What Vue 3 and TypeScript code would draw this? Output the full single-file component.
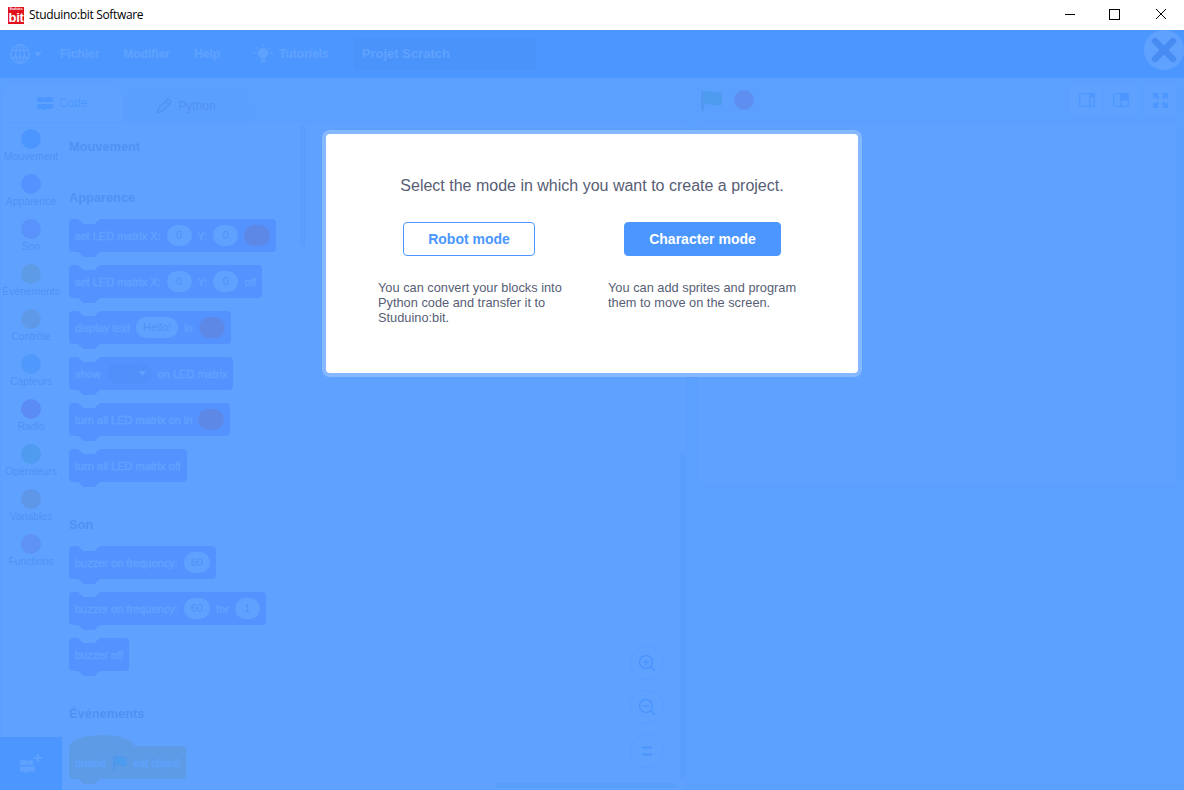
<script setup lang="ts">
type Part = { k: 't' | 'i' | 'c' | 'd' | 'f'; v?: string }
type Block = { parts: Part[]; hat?: boolean }
type Section = { title: string; blocks: Block[] }

const t = (v: string): Part => ({ k: 't', v })
const i = (v: string): Part => ({ k: 'i', v })
const c: Part = { k: 'c' }

const categories = [
  { name: 'Mouvement', color: '#4c97ff' },
  { name: 'Apparence', color: '#9966ff' },
  { name: 'Son', color: '#cf63cf' },
  { name: 'Événements', color: '#ffbf00' },
  { name: 'Contrôle', color: '#ffab19' },
  { name: 'Capteurs', color: '#5cb1d6' },
  { name: 'Radio', color: '#e01f9c' },
  { name: 'Opérateurs', color: '#59c059' },
  { name: 'Variables', color: '#ff8c1a' },
  { name: 'Functions', color: '#ff6680' },
]

const sections: Section[] = [
  { title: 'Mouvement', blocks: [] },
  {
    title: 'Apparence',
    blocks: [
      { parts: [t('set LED matrix X:'), i('0'), t('Y:'), i('0'), c] },
      { parts: [t('set LED matrix X:'), i('0'), t('Y:'), i('0'), t('off')] },
      { parts: [t('display text'), i('Hello!'), t('in'), c] },
      { parts: [t('show'), { k: 'd' }, t('on LED matrix')] },
      { parts: [t('turn all LED matrix on in'), c] },
      { parts: [t('turn all LED matrix off')] },
    ],
  },
  {
    title: 'Son',
    blocks: [
      { parts: [t('buzzer on frequency:'), i('60')] },
      { parts: [t('buzzer on frequency:'), i('60'), t('for'), i('1')] },
      { parts: [t('buzzer off')] },
    ],
  },
  {
    title: 'Événements',
    blocks: [{ hat: true, parts: [t('quand'), { k: 'f' }, t('est cliqué')] }],
  },
]
</script>

<template>
  <div class="window">
    <header class="titlebar">
      <div class="logo"><span class="logo-small">Studuino</span><span class="logo-bit">bit</span></div>
      <span class="title">Studuino:bit Software</span>
      <div class="winctl">
        <svg width="46" height="30" viewBox="0 0 46 30"><path d="M18 14.5h10" stroke="#000" fill="none" /></svg>
        <svg width="46" height="30" viewBox="0 0 46 30"><rect x="17.5" y="9.5" width="10" height="10" stroke="#000" fill="none" /></svg>
        <svg width="46" height="30" viewBox="0 0 46 30"><path d="M18 9l10 10M28 9L18 19" stroke="#000" fill="none" /></svg>
      </div>
    </header>

    <div class="app">
      <nav class="menubar">
        <svg class="globe" width="20" height="20" viewBox="0 0 20 20" fill="none" stroke="#fff" stroke-width="1.4">
          <circle cx="10" cy="10" r="9.2" />
          <ellipse cx="10" cy="10" rx="4.4" ry="9.2" />
          <path d="M10 .8v18.4M1.8 6.5h16.4M1.8 13.5h16.4" />
        </svg>
        <svg class="caret" width="8" height="5" viewBox="0 0 8 5"><path d="M0 0h8L4 5z" fill="#fff" /></svg>
        <span class="menu m-file">Fichier</span>
        <span class="menu m-edit">Modifier</span>
        <span class="menu m-help">Help</span>
        <svg class="bulb" width="20" height="20" viewBox="0 0 20 20" fill="#fff">
          <path d="M10 4.2a5 5 0 0 0-3 9c.6.5.8 1 .8 1.6h4.4c0-.6.2-1.1.8-1.6a5 5 0 0 0-3-9zM8 15.8h4v1.4a1 1 0 0 1-1 1H9a1 1 0 0 1-1-1z" />
          <path d="M10 0.8v1.7M3.2 3.4l1.2 1.2M16.8 3.4l-1.2 1.2M0.8 9.2h1.7M17.5 9.2h1.7" stroke="#fff" stroke-width="1.2" stroke-linecap="round" />
        </svg>
        <span class="menu">Tutoriels</span>
        <div class="project">Projet Scratch</div>
        <div class="closebtn">
          <svg width="28" height="28" viewBox="0 0 28 28"><path d="M5 5l18 18M23 5L5 23" stroke="#1d2a78" stroke-width="6.5" stroke-linecap="round" /></svg>
        </div>
      </nav>

      <div class="body">
        <section class="editor">
          <div class="tabs">
            <div class="tab active">
              <svg width="16" height="13" viewBox="0 0 16 13" fill="#4c97ff"><path d="M1 0h5l1 1h2l1-1h5a1 1 0 0 1 1 1v3a1 1 0 0 1-1 1H1a1 1 0 0 1-1-1V1a1 1 0 0 1 1-1zM1 7h14a1 1 0 0 1 1 1v3a1 1 0 0 1-1 1h-5l-1 1H6l-1-1H1a1 1 0 0 1-1-1V8a1 1 0 0 1 1-1z" /></svg>
              <span>Code</span>
            </div>
            <div class="tab">
              <svg width="16" height="16" viewBox="0 0 16 16" fill="none" stroke="#575e75" stroke-width="1.3" stroke-linejoin="round"><path d="M1.5 14.5l.8-4L11 1.7a1.5 1.5 0 0 1 2.1 0l1.200 1.200a1.500 1.500 0 0 1 0 2.100L5.500 13.700zM9.500 3.200l3.300 3.300" /></svg>
              <span>Python</span>
            </div>
          </div>

          <div class="panel">
            <aside class="cats">
              <div class="cat-list">
                <div v-for="cat in categories" :key="cat.name" class="cat">
                  <span class="dot" :style="{ background: cat.color }"></span>
                  <span class="cat-name">{{ cat.name }}</span>
                </div>
              </div>
              <div class="ext">
                <svg width="22" height="20" viewBox="0 0 22 20" fill="#fff"><path d="M1 6h4l1 1h2l1-1h3a1 1 0 0 1 1 1v3a1 1 0 0 1-1 1H1a1 1 0 0 1-1-1V7a1 1 0 0 1 1-1zM1 12.500h13a1 1 0 0 1 1 1v3a1 1 0 0 1-1 1H9l-1 1H5l-1-1H1a1 1 0 0 1-1-1v-3a1 1 0 0 1 1-1zM17 0h2v3h3v2h-3v3h-2V5h-3V3h3z" /></svg>
              </div>
            </aside>

            <div class="palette">
              <div v-for="sec in sections" :key="sec.title" class="section">
                <h3 class="sec-title">{{ sec.title }}</h3>
                <div v-if="sec.blocks.length" class="blocks">
                  <div
                    v-for="(b, bi) in sec.blocks"
                    :key="bi"
                    class="block"
                    :class="{ hat: b.hat }"
                  >
                    <template v-for="(p, pi) in b.parts" :key="pi">
                      <span v-if="p.k === 't'" class="b-text">{{ p.v }}</span>
                      <span v-else-if="p.k === 'i'" class="b-input">{{ p.v }}</span>
                      <span v-else-if="p.k === 'c'" class="b-color"></span>
                      <span v-else-if="p.k === 'd'" class="b-drop">
                        <svg width="18" height="17" viewBox="0 0 18 17" fill="none" stroke="#6d3fd6" stroke-width="1.500"><path d="M2 1v15M6 1v15M10 1v15M14 1v15" /></svg>
                        <svg width="7" height="5" viewBox="0 0 7 5"><path d="M0 0h7L3.500 5z" fill="#fff" /></svg>
                      </span>
                      <svg v-else class="b-flag" width="16" height="16" viewBox="0 0 16 16"><path d="M2 1v15" stroke="#45993d" stroke-width="1.500" /><path d="M3 2c4-2 6 2 11 0v8c-5 2-7-2-11 0z" fill="#4cbf56" stroke="#45993d" /></svg>
                    </template>
                  </div>
                </div>
              </div>
              <div class="pal-scroll"></div>
            </div>

            <div class="workspace">
              <div class="zoomers">
                <div class="zoomer">
                  <svg width="18" height="18" viewBox="0 0 18 18" fill="none" stroke="#2f7fee" stroke-width="1.500" stroke-linecap="round"><circle cx="8" cy="8" r="6.500" /><path d="M13 13l3.500 3.500M8 5.500v5M5.500 8h5" /></svg>
                </div>
                <div class="zoomer">
                  <svg width="18" height="18" viewBox="0 0 18 18" fill="none" stroke="#2f7fee" stroke-width="1.500" stroke-linecap="round"><circle cx="8" cy="8" r="6.500" /><path d="M13 13l3.500 3.500M5.500 8h5" /></svg>
                </div>
                <div class="zoomer">
                  <svg width="12" height="10" viewBox="0 0 12 10" fill="none" stroke="#2f7fee" stroke-width="2"><path d="M1 1.500h10M1 8.500h10" /></svg>
                </div>
              </div>
              <div class="scroll-v"></div>
              <div class="scroll-h"></div>
            </div>
          </div>
        </section>

        <section class="stagecol">
          <div class="stagehead">
            <svg class="flag" width="22" height="21" viewBox="0 0 22 21"><path d="M1.500 1v20" stroke="#45993d" stroke-width="2" /><path d="M3 2c6-3 10 2 18 0v13c-8 2-12-3-18 0z" fill="#4cbf56" /></svg>
            <span class="stop"></span>
            <div class="spacer"></div>
            <div class="sbtn-group">
              <div class="sbtn">
                <svg width="16" height="14" viewBox="0 0 16 14" fill="none" stroke="#4c97ff" stroke-width="1.300"><rect x=".7" y=".7" width="14.600" height="12.600" rx="1" /><path d="M11 .7v12.600" /><rect x="11.500" y="1" width="3.500" height="3" fill="#4c97ff" stroke="none" /></svg>
              </div>
              <div class="sbtn sep">
                <svg width="16" height="14" viewBox="0 0 16 14" fill="none" stroke="#4c97ff" stroke-width="1.300"><rect x=".7" y=".7" width="14.600" height="12.600" rx="1" /><path d="M7.500 .7v12.600M7.500 7h8" /><rect x="8" y="1" width="7" height="6" fill="#4c97ff" stroke="none" /></svg>
              </div>
            </div>
            <div class="sbtn single">
              <svg width="15" height="15" viewBox="0 0 15 15" fill="#4c97ff"><path d="M0 0h6L4.200 1.800 6.500 4.100 4.100 6.500 1.800 4.200 0 6zM15 0v6l-1.800-1.800-2.300 2.300-2.400-2.400 2.300-2.300L9 0zM0 15V9l1.800 1.800 2.300-2.300 2.400 2.400-2.300 2.300L6 15zM15 15H9l1.800-1.800-2.300-2.300 2.400-2.400 2.300 2.300L15 9z" /></svg>
            </div>
          </div>
          <div class="stage"></div>
        </section>
      </div>

      <div class="overlay"></div>

      <div class="modal" role="dialog">
        <p class="prompt">Select the mode in which you want to create a project.</p>
        <div class="modes">
          <div class="mode mode-robot">
            <button class="btn btn-outline">Robot mode</button>
            <p class="desc">You can convert your blocks into<br />Python code and transfer it to<br />Studuino:bit.</p>
          </div>
          <div class="mode mode-char">
            <button class="btn btn-solid">Character mode</button>
            <p class="desc">You can add sprites and program<br />them to move on the screen.</p>
          </div>
        </div>
      </div>
    </div>
  </div>
</template>

<style>
html, body { margin: 0; padding: 0; overflow: hidden; }
</style>

<style scoped>
.window {
  width: 1184px;
  height: 790px;
  display: flex;
  flex-direction: column;
  overflow: hidden;
  font-family: "Liberation Sans", Arial, sans-serif;
  background: #fff;
}
.titlebar {
  height: 30px;
  flex: none;
  display: flex;
  align-items: center;
  padding-left: 8px;
  background: #fff;
}
.logo {
  width: 16px;
  height: 17px;
  background: #e0101c;
  display: flex;
  flex-direction: column;
  align-items: center;
  color: #fff;
  overflow: hidden;
  font-weight: 700;
}
.logo-small { font-size: 3px; line-height: 5px; white-space: nowrap; }
.logo-bit { font-size: 13px; line-height: 11px; letter-spacing: -0.3px; }
.title {
  margin-left: 5px;
  font: 12px/30px "Open Sans", "Noto Sans", sans-serif;
  letter-spacing: -0.33px;
  color: #000;
}
.winctl { margin-left: auto; display: flex; }
.winctl svg { display: block; margin-left: -1px; }
.winctl svg:last-child { margin-left: 0; }

.app {
  position: relative;
  flex: 1;
  min-height: 0;
  display: flex;
  flex-direction: column;
  background: #e6f0ff;
}
.menubar {
  height: 48px;
  flex: none;
  display: flex;
  align-items: center;
  padding-left: 10px;
  background: #4c97ff;
  position: relative;
}
.caret { margin-left: 4px; }
.menu { color: #fff; font-size: 12px; font-weight: 700; }
.m-file { margin-left: 18px; }
.m-edit { margin-left: 24px; }
.m-help { margin-left: 24px; }
.bulb { margin-left: 33px; margin-right: 6px; }
.project {
  margin-left: 25px;
  width: 174px;
  height: 32px;
  padding-left: 8px;
  border-radius: 4px;
  background: #3070d0;
  color: #fff;
  font-size: 13px;
  font-weight: 700;
  line-height: 32px;
}
.closebtn {
  position: absolute;
  right: 0;
  top: 0;
  width: 40px;
  height: 40px;
  border-radius: 50%;
  background: #fff;
  display: flex;
  align-items: center;
  justify-content: center;
}

.body { flex: 1; min-height: 0; display: flex; }
.editor {
  width: 688px;
  flex: none;
  display: flex;
  flex-direction: column;
  padding-top: 5px;
  box-sizing: border-box;
}
.tabs { height: 39px; flex: none; display: flex; align-items: flex-end; }
.tab {
  height: 34px;
  width: 126px;
  margin-left: -1px;
  box-sizing: border-box;
  border: 1px solid #cfdcf0;
  border-bottom: 0;
  border-radius: 16px 16px 0 0;
  background: #d9e3f2;
  display: flex;
  align-items: center;
  justify-content: center;
  gap: 6px;
  font-size: 12px;
  color: #575e75;
}
.tab.active {
  height: 39px;
  width: 124px;
  margin-left: 0;
  background: #fff;
  color: #4c97ff;
}
.panel {
  flex: 1;
  min-height: 0;
  display: flex;
  background: #fff;
  border: 1px solid #cfdcf0;
  border-bottom-right-radius: 8px;
  border-bottom: 0;
  box-sizing: border-box;
}
.cats {
  width: 60px;
  flex: none;
  display: flex;
  flex-direction: column;
  border-right: 1px solid #e9eef2;
}
.cat-list { flex: 1; padding-top: 6px; }
.cat {
  height: 45px;
  display: flex;
  flex-direction: column;
  align-items: center;
  white-space: nowrap;
}
.dot { width: 20px; height: 20px; border-radius: 50%; flex: none; margin-bottom: 2px; }
.cat-name { font-size: 10.400px; line-height: 12px; color: #575e75; }
.ext {
  height: 53px;
  flex: none;
  margin: 0 -1px;
  background: #4c97ff;
  display: flex;
  align-items: center;
  justify-content: center;
}
.palette {
  width: 248px;
  flex: none;
  position: relative;
  overflow: hidden;
  box-sizing: border-box;
  padding: 16px 0 0 7px;
  border-right: 1px solid #eef1f5;
}
.section + .section { margin-top: 35px; }
.sec-title {
  margin: 0 0 13px;
  font-size: 12.800px;
  line-height: 16px;
  font-weight: 700;
  color: #575e75;
}
.blocks { display: flex; flex-direction: column; align-items: flex-start; gap: 13px; }
.block {
  position: relative;
  height: 33px;
  display: flex;
  align-items: center;
  gap: 6px;
  padding: 0 6px;
  background: #9966ff;
  border-radius: 4px;
  white-space: nowrap;
}
.block::before {
  content: "";
  position: absolute;
  left: 9px;
  top: 0;
  width: 22px;
  height: 5px;
  background: #fff;
  clip-path: polygon(0 0, 100% 0, 75% 100%, 25% 100%);
}
.block::after {
  content: "";
  position: absolute;
  left: 9px;
  top: 33px;
  width: 22px;
  height: 5px;
  background: inherit;
  clip-path: polygon(0 0, 100% 0, 75% 100%, 25% 100%);
}
.block.hat { background: #ffbf00; margin-top: 11px; }
.block.hat::before {
  left: 0;
  top: -11px;
  width: 66px;
  height: 12px;
  background: #ffbf00;
  clip-path: ellipse(50% 100% at 50% 100%);
}
.b-text { color: #fff; font-size: 11px; -webkit-text-stroke: 0.4px #fff; }
.b-input {
  min-width: 25px;
  height: 21px;
  box-sizing: border-box;
  padding: 0 7px;
  border-radius: 11px;
  background: #fff;
  color: #575e75;
  font-size: 11px;
  line-height: 21px;
  text-align: center;
}
.b-color { width: 26px; height: 21px; border-radius: 11px; background: #f00; }
.b-drop {
  width: 45px;
  height: 21px;
  box-sizing: border-box;
  padding: 0 6px 0 8px;
  border-radius: 11px;
  background: #774dcb;
  display: flex;
  align-items: center;
  justify-content: space-between;
}
.pal-scroll {
  position: absolute;
  left: 238px;
  top: 2px;
  width: 6px;
  height: 122px;
  border-radius: 3px;
  background: #d0d4dc;
}
.workspace { position: relative; flex: 1; background: #f9f9f9; border-bottom-right-radius: 8px; }
.zoomers {
  position: absolute;
  left: 320px;
  top: 523px;
  display: flex;
  flex-direction: column;
  gap: 10px;
}
.zoomer {
  width: 34px;
  height: 34px;
  box-sizing: border-box;
  border-radius: 50%;
  border: 1px solid #cdd6e6;
  background: #fdfdfd;
  display: flex;
  align-items: center;
  justify-content: center;
}
.scroll-v {
  position: absolute;
  right: 1px;
  top: 329px;
  width: 6px;
  height: 328px;
  border-radius: 3px;
  background: #d6dae2;
}
.scroll-h {
  position: absolute;
  right: 10px;
  bottom: 2px;
  width: 182px;
  height: 5px;
  border-radius: 3px;
  background: #d6dae2;
}

.stagecol {
  margin-left: 9px;
  width: 480px;
  flex: none;
  display: flex;
  flex-direction: column;
  padding-top: 5px;
}
.stagehead { height: 40px; flex: none; display: flex; align-items: flex-start; }
.flag { margin: 7px 0 0 4px; }
.stop { width: 20px; height: 20px; margin: 7px 0 0 11px; border-radius: 50%; background: #f04a6e; }
.spacer { flex: 1; }
.sbtn-group { display: flex; border: 1px solid #d9e3f2; border-radius: 4px; background: #fff; height: 32px; }
.sbtn { width: 33px; display: flex; align-items: center; justify-content: center; }
.sbtn.sep { border-left: 1px solid #d9e3f2; }
.sbtn.single {
  width: 34px;
  height: 34px;
  box-sizing: border-box;
  margin-left: 5px;
  border: 1px solid #d9e3f2;
  border-radius: 4px;
  background: #fff;
}
.stage {
  height: 361px;
  flex: none;
  box-sizing: border-box;
  background: #fff;
  border: 1px solid #cfdcf0;
  border-radius: 8px;
}

.overlay {
  position: absolute;
  inset: 0;
  background: hsla(215, 100%, 65%, 0.9);
}
.modal {
  position: absolute;
  left: 326px;
  top: 104px;
  width: 532px;
  height: 239px;
  box-sizing: border-box;
  background: #fff;
  border-radius: 4px;
  box-shadow: 0 0 0 4px hsla(0, 0%, 100%, 0.25);
  padding-top: 43px;
  color: #575e75;
}
.prompt { margin: 0; font-size: 16px; line-height: 18px; text-align: center; }
.modes { display: flex; padding-left: 52px; margin-top: 27px; gap: 48px; }
.mode { display: flex; flex-direction: column; align-items: center; }
.mode-robot { width: 182px; }
.mode-char { width: 189px; }
.btn {
  height: 34px;
  box-sizing: border-box;
  border-radius: 4px;
  font: 700 14px/1 "Liberation Sans", Arial, sans-serif;
  border: 1px solid #4c97ff;
  padding: 0;
}
.btn-outline { width: 132px; background: #fff; color: #4c97ff; }
.btn-solid { width: 157px; background: #4c97ff; color: #fff; }
.desc {
  align-self: flex-start;
  margin: 24px 0 0;
  font-size: 12.800px;
  line-height: 15px;
  white-space: nowrap;
}
</style>
